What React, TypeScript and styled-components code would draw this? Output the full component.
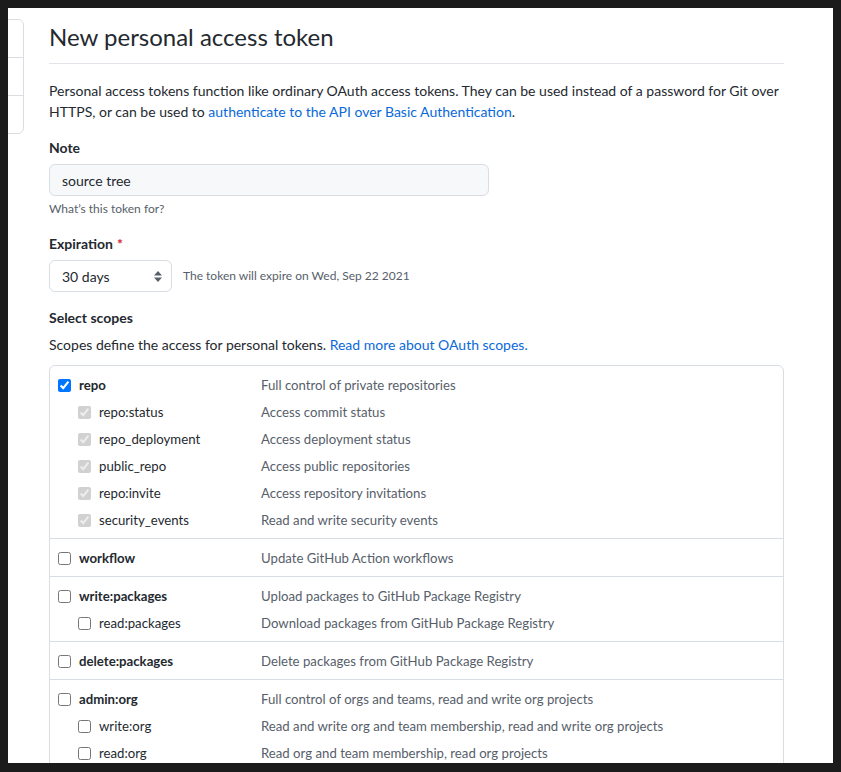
import React from "react";
import styled, { createGlobalStyle } from "styled-components";

const Global = createGlobalStyle`
  html, body {
    margin: 0;
    padding: 0;
    background: #1b1b1b;
  }
  body {
    font-family: Lato, "Open Sans", "Liberation Sans", sans-serif;
    color: #24292f;
    font-size: 14px;
    line-height: 1.5;
  }
  * { box-sizing: border-box; }
`;

const Frame = styled.div`
  margin: 8px 0 0 8px;
  width: 825px;
  height: 755px;
  background: #ffffff;
  overflow: hidden;
  display: flex;
  align-items: flex-start;
  padding-top: 11px;
`;

const SideNav = styled.nav`
  flex: none;
  width: 216px;
  margin-left: -200px;
  border: 1px solid #d8dee4;
  border-radius: 6px;
`;

const SideItem = styled.a`
  display: block;
  height: 37px;
  line-height: 37px;
  padding-left: 16px;
  font-size: 14px;
  color: #24292f;
  text-decoration: none;
  & + & {
    border-top: 1px solid #d8dee4;
    height: 38px;
  }
`;

const Main = styled.main`
  flex: none;
  width: 735px;
  margin-left: 25px;
`;

const Subhead = styled.div`
  padding-bottom: 8px;
  margin-bottom: 16px;
  border-bottom: 1px solid #e1e4e8;
`;

const Title = styled.h2`
  margin: 0;
  font-size: 24px;
  line-height: 36px;
  font-weight: 400;
  color: #24292f;
`;

const Text = styled.p<{ $mb?: number }>`
  margin: 0 0 ${(p) => p.$mb ?? 0}px;
  font-size: 14px;
  line-height: 21px;
`;

const Link = styled.a`
  color: #0969da;
  text-decoration: none;
`;

const FieldLabel = styled.div<{ $mt?: number }>`
  margin-top: ${(p) => p.$mt ?? 0}px;
  margin-bottom: 6px;
  font-size: 14px;
  line-height: 21px;
  font-weight: 700;
`;

const Required = styled.span`
  color: #cf222e;
  margin-left: 4px;
`;

const TextInput = styled.input`
  display: block;
  width: 440px;
  height: 32px;
  padding: 0 12px;
  font: inherit;
  font-size: 14px;
  color: #24292f;
  background: #f6f8fa;
  border: 1px solid #d8dee4;
  border-radius: 6px;
  outline: none;
`;

const Hint = styled.p`
  margin: 4px 0 0;
  font-size: 12px;
  line-height: 18px;
  color: #57606a;
`;

const SelectRow = styled.div`
  display: flex;
  align-items: center;
  gap: 11px;
`;

const FakeSelect = styled.div`
  width: 123px;
  height: 32px;
  display: flex;
  align-items: center;
  justify-content: space-between;
  padding: 0 9px 0 12px;
  font-size: 14px;
  background: #ffffff;
  border: 1px solid #d8dee4;
  border-radius: 6px;
`;

const InlineNote = styled.span`
  font-size: 12px;
  line-height: 18px;
  color: #57606a;
`;

const ScopeTable = styled.div`
  margin-top: 10px;
  width: 735px;
  border: 1px solid #d8dee4;
  border-radius: 6px;
`;

const ScopeGroup = styled.div`
  padding: 5px 0;
  & + & {
    border-top: 1px solid #d8dee4;
  }
`;

const ScopeLine = styled.label`
  display: grid;
  grid-template-columns: 211px 1fr;
  height: 27px;
  align-items: center;
  font-size: 13.2px;
  line-height: 20px;
  padding-top: 1px;
`;

const ScopeName = styled.span<{ $child?: boolean }>`
  display: flex;
  align-items: center;
  gap: 8px;
  padding-left: ${(p) => (p.$child ? 28 : 8)}px;
  font-weight: ${(p) => (p.$child ? 400 : 700)};
  color: #24292f;
`;

const Check = styled.input`
  margin: 0;
  width: 13px;
  height: 13px;
  flex: none;
`;

const ScopeDesc = styled.span`
  color: #57606a;
`;

type Scope = { name: string; desc: string; child?: boolean };

const groups: { scopes: Scope[]; checked?: boolean }[] = [
  {
    checked: true,
    scopes: [
      { name: "repo", desc: "Full control of private repositories" },
      { name: "repo:status", desc: "Access commit status", child: true },
      { name: "repo_deployment", desc: "Access deployment status", child: true },
      { name: "public_repo", desc: "Access public repositories", child: true },
      { name: "repo:invite", desc: "Access repository invitations", child: true },
      { name: "security_events", desc: "Read and write security events", child: true },
    ],
  },
  { scopes: [{ name: "workflow", desc: "Update GitHub Action workflows" }] },
  {
    scopes: [
      { name: "write:packages", desc: "Upload packages to GitHub Package Registry" },
      { name: "read:packages", desc: "Download packages from GitHub Package Registry", child: true },
    ],
  },
  { scopes: [{ name: "delete:packages", desc: "Delete packages from GitHub Package Registry" }] },
  {
    scopes: [
      { name: "admin:org", desc: "Full control of orgs and teams, read and write org projects" },
      { name: "write:org", desc: "Read and write org and team membership, read and write org projects", child: true },
      { name: "read:org", desc: "Read org and team membership, read org projects", child: true },
    ],
  },
  {
    scopes: [
      { name: "admin:public_key", desc: "Full control of user public keys" },
      { name: "write:public_key", desc: "Write user public keys", child: true },
      { name: "read:public_key", desc: "Read user public keys", child: true },
    ],
  },
];

const SelectArrows = () => (
  <svg width="8" height="11" viewBox="0 0 8 11" aria-hidden="true">
    <path d="M4 0L8 4.5H0Z M0 6.5H8L4 11Z" fill="#57606a" />
  </svg>
);

export default function App() {
  return (
    <>
      <Global />
      <Frame>
        <SideNav>
          <SideItem href="#">GitHub Apps</SideItem>
          <SideItem href="#">OAuth Apps</SideItem>
          <SideItem href="#">Personal access tokens</SideItem>
        </SideNav>
        <Main>
          <Subhead>
            <Title>New personal access token</Title>
          </Subhead>
          <Text $mb={15}>
            Personal access tokens function like ordinary OAuth access tokens. They can be used instead of a password for Git over
            HTTPS, or can be used to <Link href="#">authenticate to the API over Basic Authentication</Link>.
          </Text>

          <FieldLabel>Note</FieldLabel>
          <TextInput defaultValue="source tree" />
          <Hint>What’s this token for?</Hint>

          <FieldLabel $mt={15}>
            Expiration<Required>*</Required>
          </FieldLabel>
          <SelectRow>
            <FakeSelect>
              <span>30 days</span>
              <SelectArrows />
            </FakeSelect>
            <InlineNote>The token will expire on Wed, Sep 22 2021</InlineNote>
          </SelectRow>

          <FieldLabel $mt={15}>Select scopes</FieldLabel>
          <Text>
            Scopes define the access for personal tokens. <Link href="#">Read more about OAuth scopes.</Link>
          </Text>

          <ScopeTable>
            {groups.map((g, gi) => (
              <ScopeGroup key={gi}>
                {g.scopes.map((s) => (
                  <ScopeLine key={s.name}>
                    <ScopeName $child={s.child}>
                      <Check
                        type="checkbox"
                        defaultChecked={!!g.checked}
                        disabled={!!g.checked && s.child}
                      />
                      {s.name}
                    </ScopeName>
                    <ScopeDesc>{s.desc}</ScopeDesc>
                  </ScopeLine>
                ))}
              </ScopeGroup>
            ))}
          </ScopeTable>
        </Main>
      </Frame>
    </>
  );
}
